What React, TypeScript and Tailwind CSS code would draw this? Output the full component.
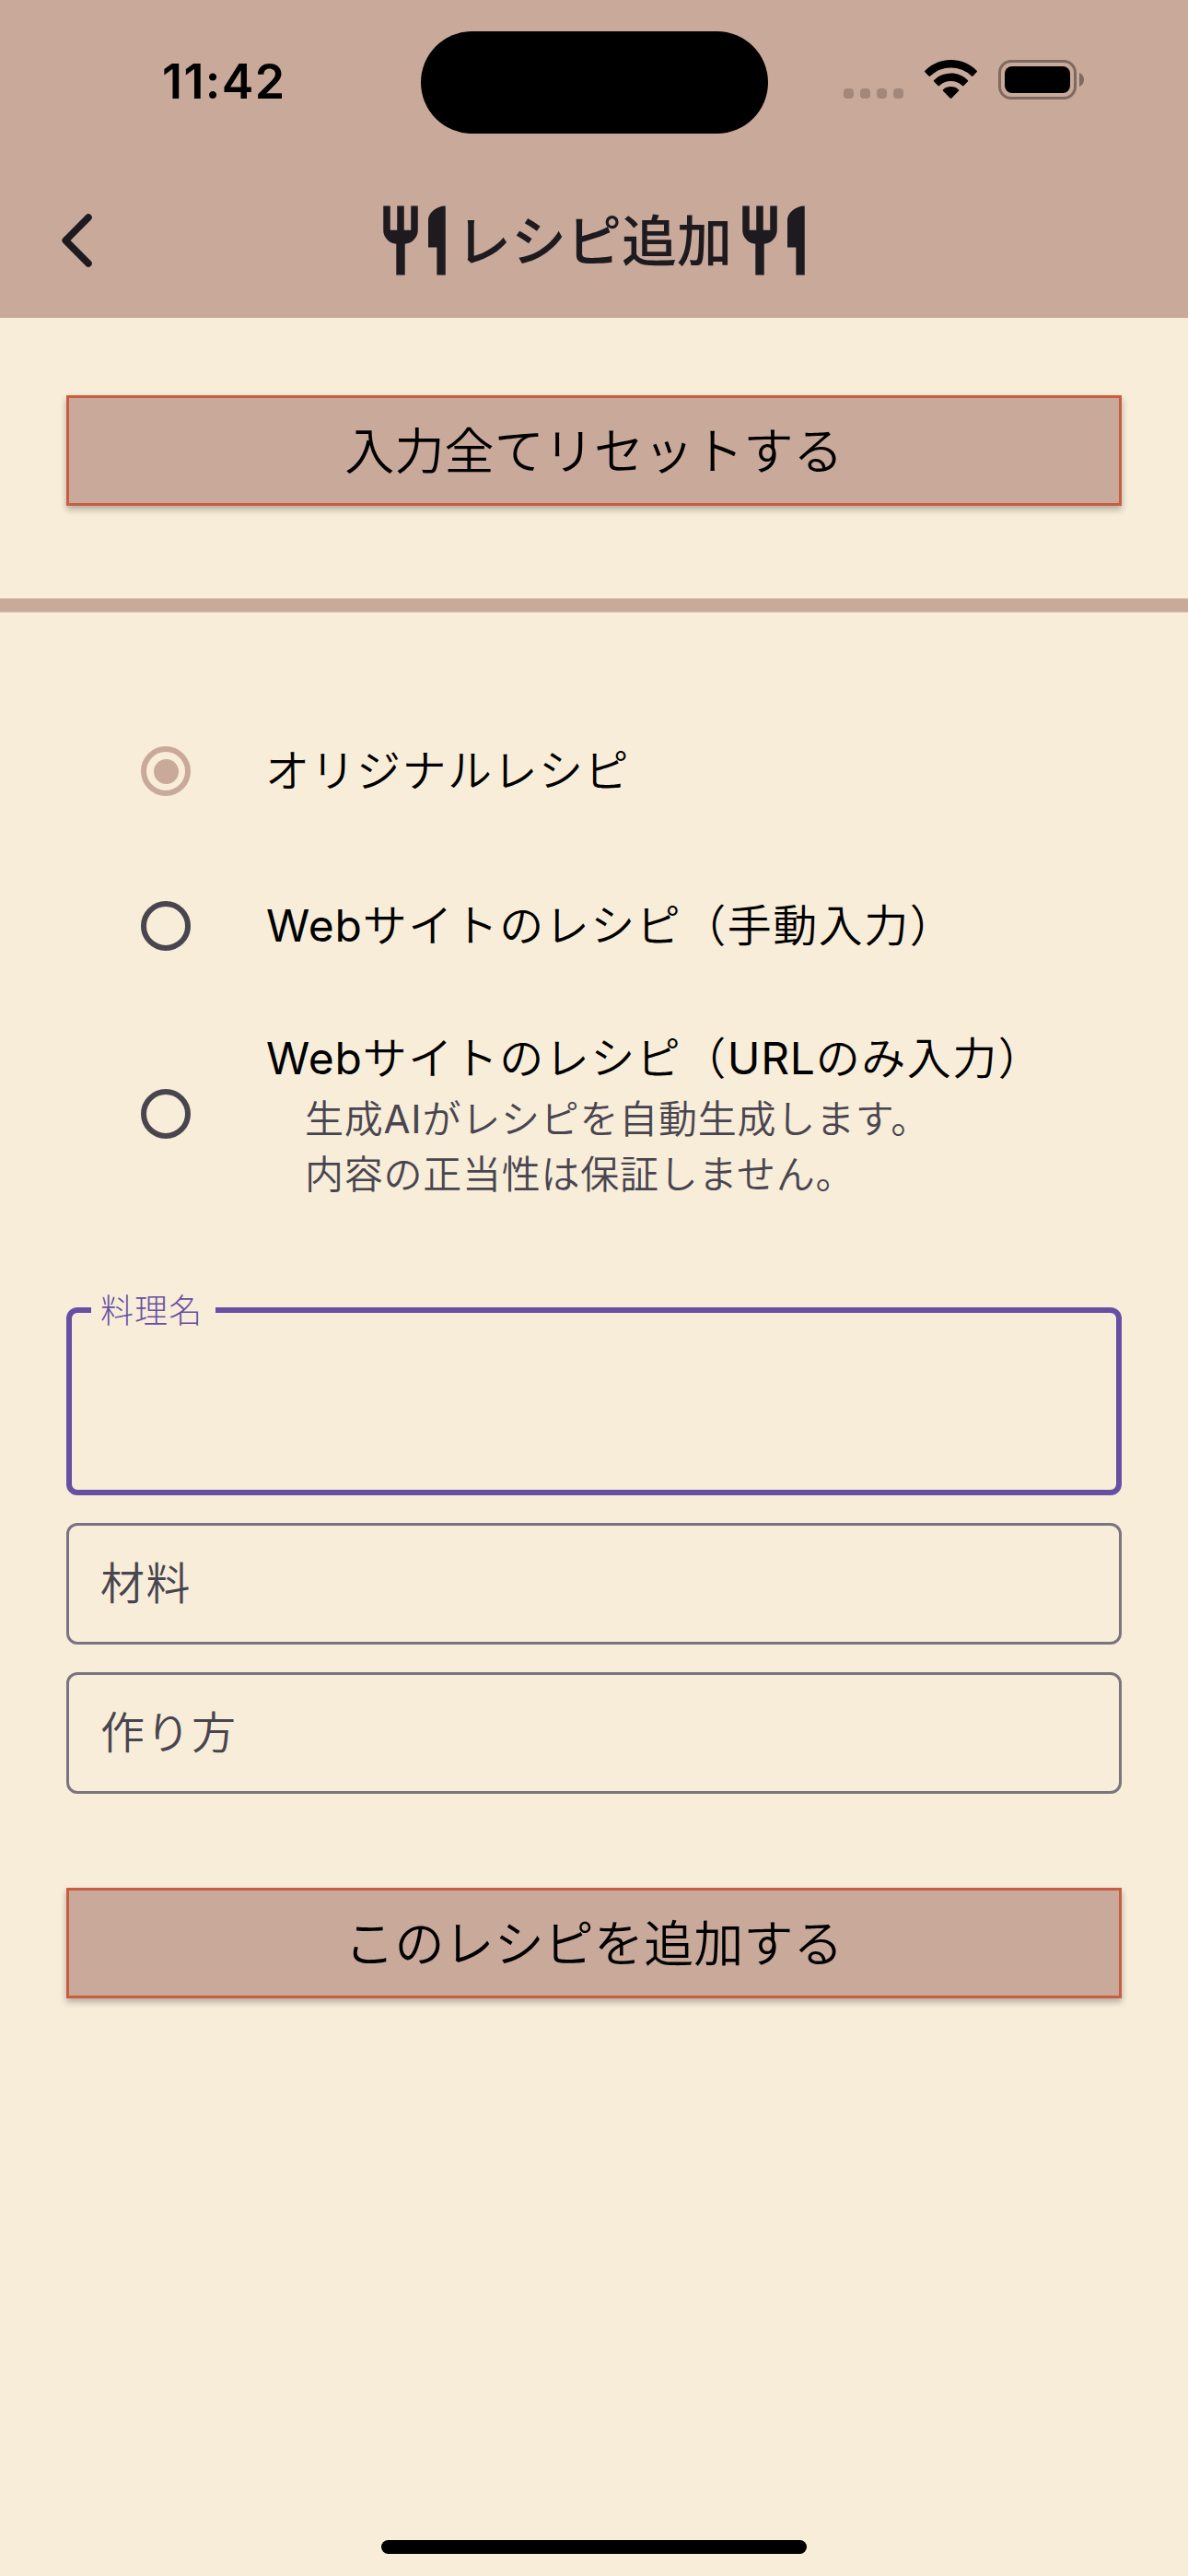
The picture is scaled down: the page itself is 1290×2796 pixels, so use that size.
import type { ReactNode } from "react";

function CutleryIcon() {
  return (
    <svg viewBox="0 0 24 24" className="size-[90px] shrink-0" fill="currentColor">
      <path d="M11 9H9V2H7v7H5V2H3v7c0 2.12 1.66 3.84 3.75 3.97V22h2.5v-9.03C11.34 12.84 13 11.12 13 9V2h-2v7zm5-3v8h2.5v8H21V2c-2.76 0-5 2.24-5 4z" />
    </svg>
  );
}

function StatusBar() {
  return (
    <div className="flex h-[177px] items-start">
      <div className="flex w-[456.5px] pl-[176px] pt-[57px]">
        <span className="text-[52px] font-semibold leading-[64px] tracking-[1.4px] text-black">11:42</span>
      </div>
      <div className="mt-[33.5px] h-[111px] w-[377px] rounded-full bg-black" />
      <div className="flex flex-1 items-start pl-[82.5px] pt-[65px]">
        <div className="flex gap-[7px] pt-[31px]">
          {[0, 1, 2, 3].map((i) => (
            <div key={i} className="h-[11px] w-[11px] rounded-[4px] bg-[#a4877b]" />
          ))}
        </div>
        <svg viewBox="0 0 57 42" className="ml-[23px] h-[42px] w-[57px]">
          <path d="M28.5 0C39.3 0 49.500 4.300 56.600 11.700Q57.400 12.500 56.600 13.300L52.500 17.500Q51.700 18.300 50.900 17.500A32.300 32.300 0 0 0 6.100 17.500Q5.300 18.300 4.500 17.500L0.400 13.300Q-0.400 12.500 0.400 11.700C7.500 4.300 17.700 0 28.500 0Z" />
          <path d="M28.500 14.600C35.500 14.600 42 17.300 46.800 21.900Q47.600 22.700 46.800 23.500L42.500 27.900Q41.700 28.600 40.900 27.900A18.400 18.400 0 0 0 16.100 27.900Q15.300 28.600 14.500 27.900L10.200 23.500Q9.400 22.700 10.200 21.900C15 17.300 21.500 14.600 28.500 14.600Z" />
          <path d="M28.500 29C31.700 29 34.700 30.200 36.900 32.200Q37.700 33 36.900 33.800L29.400 41.400Q28.500 42.200 27.600 41.400L20.100 33.800Q19.300 33 20.100 32.200C22.300 30.200 25.300 29 28.500 29Z" />
        </svg>
        <div className="ml-[23px] h-[43px] w-[85px] rounded-[14px] border-[3px] border-[#7f6a61] p-[4px]">
          <div className="h-full w-full rounded-[8px] bg-black" />
        </div>
        <svg viewBox="0 0 5 15" className="ml-[3px] mt-[14px] h-[15px] w-[5px]" fill="#7f6a61">
          <path d="M0 0C3 1.200 5 4 5 7.500S3 13.800 0 15Z" />
        </svg>
      </div>
    </div>
  );
}

function ActionButton({ label }: { label: string }) {
  return (
    <button className="flex h-[120px] w-full items-center justify-center border-[3px] border-[#c85d43] bg-[#c9a99a] pt-[3px] text-[54px] font-[350] leading-[60px] tracking-[0.15px] text-black shadow-[0_4px_7px_rgba(0,0,0,0.28)]">
      {label}
    </button>
  );
}

function Radio({ checked = false }: { checked?: boolean }) {
  return checked ? (
    <span className="flex size-[54px] shrink-0 items-center justify-center rounded-full border-[6px] border-[#c9a99a]">
      <span className="size-[27px] rounded-full bg-[#c9a99a]" />
    </span>
  ) : (
    <span className="size-[54px] shrink-0 rounded-full border-[6px] border-[#49454f]" />
  );
}

function Latin({ children }: { children: ReactNode }) {
  return <span className="font-normal tracking-[0.8px]">{children}</span>;
}

const optionText = "text-[48px] font-[350] leading-[72px] tracking-[1.5px] text-black whitespace-nowrap";
const fieldBox =
  "flex h-[132px] items-center rounded-[12px] border-[3px] border-[#79747e] px-[34px] text-[48px] font-[350] leading-[72px] tracking-[1.5px] text-[#49454f]";

export default function App() {
  return (
    <div className="flex h-[2796px] w-[1290px] flex-col overflow-hidden bg-[#f8edd9] font-['Inter','Noto_Sans_CJK_JP',sans-serif]">
      <header className="h-[345px] bg-[#c9a99a]">
        <StatusBar />
        <div className="grid h-[168px] grid-cols-[1fr_auto_1fr] items-center text-[#1d1b20]">
          <svg viewBox="0 0 40 60" className="ml-[65px] h-[60px] w-[40px]" fill="none" stroke="currentColor" strokeWidth="7.5" strokeLinecap="round" strokeLinejoin="round">
            <path d="M31 5L6.200 30L31 55" />
          </svg>
          <h1 className="flex items-center">
            <CutleryIcon />
            <span className="pt-[1px] text-[60px] font-medium leading-[84px]">レシピ追加</span>
            <CutleryIcon />
          </h1>
        </div>
      </header>

      <div className="px-[72px] pb-[100px] pt-[84px]">
        <ActionButton label="入力全てリセットする" />
      </div>
      <div className="h-[16px] shrink-0 border-y border-[#e1cbba] bg-[#c9a99a]" />

      <div className="mt-[88px] flex flex-col pl-[153px]">
        <label className="flex h-[168px] items-center gap-[81px]">
          <Radio checked />
          <span className={optionText}>オリジナルレシピ</span>
        </label>
        <label className="flex h-[168px] items-center gap-[82px]">
          <Radio />
          <span className={optionText}>
            <Latin>Web</Latin>サイトのレシピ（手動入力）
          </span>
        </label>
        <label className="flex h-[240px] items-center gap-[82px]">
          <Radio />
          <span className="flex flex-col">
            <span className={optionText}>
              <Latin>Web</Latin>サイトのレシピ（<Latin>URL</Latin>のみ入力）
            </span>
            <span className="pl-[42px] text-[42px] font-[350] leading-[60px] tracking-[0.75px] text-[#49454f]">
              生成<Latin>AI</Latin>がレシピを自動生成します。
              <br />
              内容の正当性は保証しません。
            </span>
          </span>
        </label>
      </div>

      <div className="mt-[90px] flex flex-col gap-[30px] px-[72px]">
        <div className="relative h-[204px] rounded-[12px] border-[6px] border-[#6750a4]">
          <span className="absolute left-[21px] top-[-29px] h-[54px] w-[135px] whitespace-nowrap bg-[#f8edd9] pl-[10px] text-[36px] font-light leading-[54px] tracking-[1.1px] text-[#6750a4]">
            料理名
          </span>
        </div>
        <div className={fieldBox}>材料</div>
        <div className={fieldBox}>作り方</div>
      </div>

      <div className="mt-[102px] px-[72px]">
        <ActionButton label="このレシピを追加する" />
      </div>

      <div className="mx-auto mb-[24px] mt-auto h-[15px] w-[462px] rounded-full bg-black" />
    </div>
  );
}
